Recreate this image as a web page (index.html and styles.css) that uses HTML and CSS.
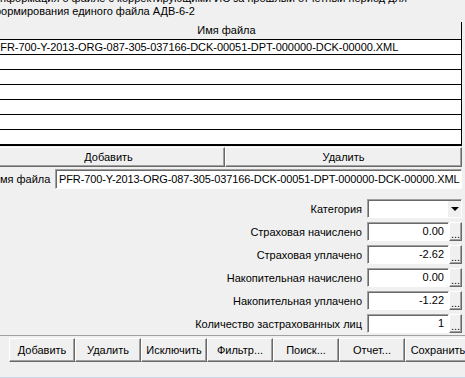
FILE: index.html
```html
<!DOCTYPE html>
<html lang="ru">
<head>
  <meta charset="UTF-8" />
  <title>Корректирующие ИС</title>
  <link rel="stylesheet" href="styles.css">
</head>
<body>
  <div class="window">
    <div class="title">Информация о файле с корректирующими ИС за прошлый отчетный период для<br>формирования единого файла АДВ-6-2</div>

    <div class="grid">
      <div class="grid-head">Имя файла</div>
      <div class="grid-row">PFR-700-Y-2013-ORG-087-305-037166-DCK-00051-DPT-000000-DCK-00000.XML</div>
      <div class="grid-row"></div>
      <div class="grid-row"></div>
      <div class="grid-row"></div>
      <div class="grid-row"></div>
      <div class="grid-row"></div>
      <div class="grid-row last"></div>
    </div>

    <div class="split">
      <button class="btn">Добавить</button>
      <button class="btn">Удалить</button>
    </div>

    <div class="file-row">
      <label class="file-label">Имя файла</label>
      <div class="field file-input">PFR-700-Y-2013-ORG-087-305-037166-DCK-00051-DPT-000000-DCK-00000.XML</div>
    </div>

    <div class="fields">
      <div class="field-row">
        <span class="field-label">Категория</span>
        <div class="field combo"><span class="arrow"></span></div>
      </div>
      <div class="field-row">
        <span class="field-label">Страховая начислено</span>
        <div class="field value">0.00</div>
        <button class="btn dots">...</button>
      </div>
      <div class="field-row">
        <span class="field-label">Страховая уплачено</span>
        <div class="field value">-2.62</div>
        <button class="btn dots">...</button>
      </div>
      <div class="field-row">
        <span class="field-label">Накопительная начислено</span>
        <div class="field value">0.00</div>
        <button class="btn dots">...</button>
      </div>
      <div class="field-row">
        <span class="field-label">Накопительная уплачено</span>
        <div class="field value">-1.22</div>
        <button class="btn dots">...</button>
      </div>
      <div class="field-row">
        <span class="field-label">Количество застрахованных лиц</span>
        <div class="field value">1</div>
        <button class="btn dots">...</button>
      </div>
    </div>

    <div class="toolbar">
      <button class="btn tool">Добавить</button>
      <button class="btn tool">Удалить</button>
      <button class="btn tool">Исключить</button>
      <button class="btn tool">Фильтр...</button>
      <button class="btn tool">Поиск...</button>
      <button class="btn tool">Отчет...</button>
      <button class="btn tool">Сохранить</button>
    </div>
  </div>
</body>
</html>
```

FILE: styles.css
```css
html, body {
  margin: 0;
  padding: 0;
}

body {
  background: #f0f0f0;
  font-family: 'Liberation Sans', Arial, sans-serif;
  font-size: 11px;
  color: #000;
  width: 465px;
  height: 377px;
  overflow: hidden;
  border-bottom: 1px solid #c8d8ec;
}

.window {
  width: 470px;
  margin-left: -8px;
}

.title {
  margin-top: -8px;
  line-height: 13px;
  height: 25px;
  white-space: nowrap;
}

.grid {
  margin-top: 5px;
  background: #fff;
  border-right: 1px solid #000;
  border-bottom: 2px solid #000;
}

.grid-head {
  height: 17px;
  line-height: 17px;
  text-align: center;
  background: #f0f0f0;
  border-bottom: 1px solid #000;
}

.grid-row {
  height: 14px;
  line-height: 14px;
  padding-left: 1px;
  border-bottom: 1px solid #000;
  white-space: nowrap;
  letter-spacing: -0.05px;
}

.grid-row.last {
  border-bottom: none;
}

.btn {
  font-family: inherit;
  font-size: 11px;
  color: #000;
  background: #f0f0f0;
  border: 1px solid;
  border-color: #fff #696969 #696969 #fff;
  box-shadow: inset -1px -1px #a0a0a0;
  padding: 0;
  margin: 0;
  box-sizing: border-box;
}

.split {
  display: flex;
  margin-top: 1px;
  height: 20px;
}

.split .btn {
  height: 20px;
}

.split .btn:first-child {
  width: 233px;
}

.split .btn:last-child {
  flex: 1;
}

.field {
  background: #fff;
  box-sizing: border-box;
  border: 1px solid;
  border-color: #a0a0a0 #fff #fff #a0a0a0;
  box-shadow: inset 1px 1px #696969;
  white-space: nowrap;
  overflow: hidden;
}

.file-row {
  display: flex;
  align-items: center;
  margin-top: 2px;
  height: 20px;
}

.file-label {
  width: 63px;
}

.file-input {
  flex: 1;
  height: 20px;
  line-height: 18px;
  padding-left: 3px;
  letter-spacing: -0.12px;
}

.fields {
  margin-top: 10px;
  display: flex;
  flex-direction: column;
  gap: 4px;
}

.field-row {
  display: flex;
  justify-content: flex-end;
  align-items: center;
  height: 19px;
}

.field-label {
  margin-right: 5px;
}

.value {
  width: 82px;
  height: 19px;
  line-height: 17px;
  text-align: right;
  padding-right: 4px;
}

.combo {
  width: 95px;
  height: 19px;
  position: relative;
}

.arrow {
  position: absolute;
  right: 0;
  top: 1px;
  width: 14px;
  height: 16px;
  background: #f0f0f0;
  border-left: 1px solid #fff;
  box-sizing: border-box;
}

.arrow::after {
  content: '';
  position: absolute;
  left: 3px;
  top: 6px;
  border-left: 4px solid transparent;
  border-right: 4px solid transparent;
  border-top: 4px solid #000;
}

.dots {
  width: 13px;
  height: 19px;
  line-height: 22px;
  overflow: hidden;
  text-align: center;
}

.toolbar {
  margin-top: 2px;
  border-top: 1px solid #a0a0a0;
  padding-top: 2px;
  padding-left: 17px;
  display: flex;
  width: 480px;
}

.tool {
  flex: none;
  width: 66px;
  height: 24px;
  white-space: nowrap;
}
```
